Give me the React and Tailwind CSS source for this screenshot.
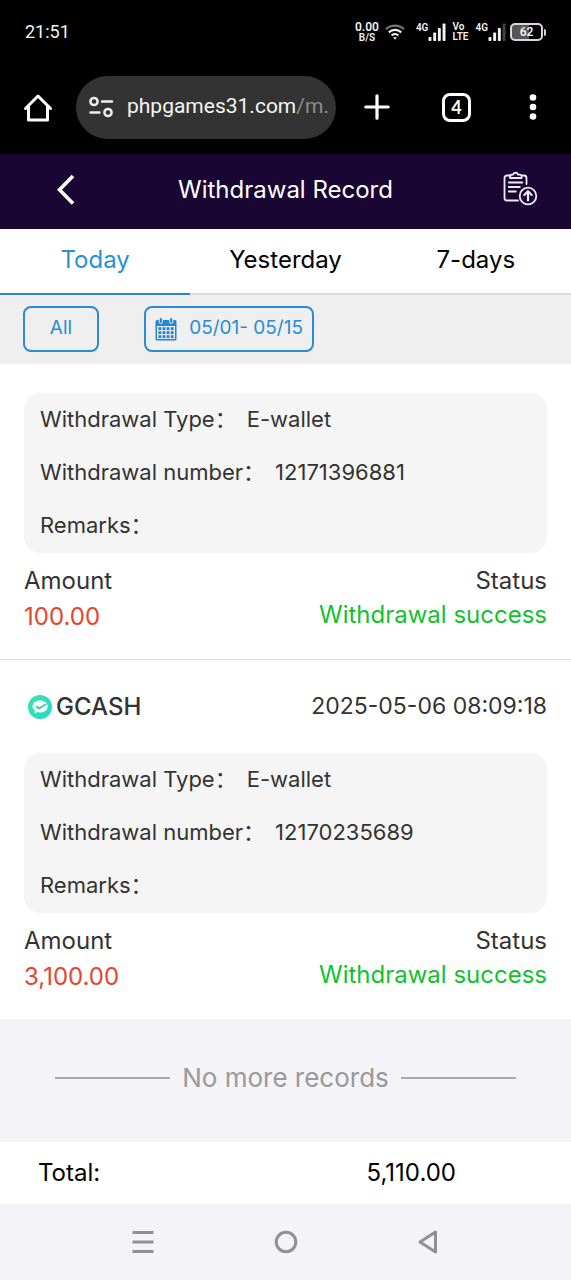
import { useState } from "react";
import clsx from "clsx";

const TABS = ["Today", "Yesterday", "7-days"];

const RECORDS = [
  { id: 1, type: "E-wallet", number: "12171396881", remarks: "", amount: "100.00", status: "Withdrawal success" },
  {
    id: 2,
    channel: "GCASH",
    time: "2025-05-06 08:09:18",
    type: "E-wallet",
    number: "12170235689",
    remarks: "",
    amount: "3,100.00",
    status: "Withdrawal success",
  },
];

const SignalIcon = ({ weak }) => (
  <svg viewBox="0 0 18 18" className="h-[18px] w-[18px]" fill="#f2f2f2" aria-hidden="true">
    <rect x="0.5" y="14" width="2.9" height="4" rx="0.8" />
    <rect x="5.2" y="9.5" width="2.9" height="8.5" rx="0.8" />
    <rect x="9.9" y="5" width="2.9" height="13" rx="0.8" />
    <rect x="14.6" y="0.5" width="2.9" height="17.5" rx="0.8" fill={weak ? "#444" : "#f2f2f2"} />
  </svg>
);

const StatusBar = () => (
  <div className="flex h-16 items-center justify-between px-[25px] text-[#f2f2f2]">
    <span className="font-[Roboto,sans-serif] text-lg">21:51</span>
    <div className="flex items-center font-[Roboto,sans-serif] font-semibold">
      <div className="flex flex-col items-center">
        <span className="text-xs leading-[11px]">0.00</span>
        <span className="text-[10px] leading-[10px]">B/S</span>
      </div>
      <svg viewBox="0 0 20 16" className="ml-[6px] h-4 w-5" fill="none" strokeWidth="2.2" aria-hidden="true">
        <path d="M1 5.2a13 13 0 0 1 18 0" stroke="#777" />
        <path d="M3.8 8.4a9 9 0 0 1 12.4 0" stroke="#f2f2f2" />
        <path d="M6.6 11.4a5 5 0 0 1 6.8 0" stroke="#f2f2f2" />
        <path d="M8 13.2h4L10 15.8z" fill="#f2f2f2" />
      </svg>
      <div className="ml-[11px] flex items-start">
        <span className="text-[10px] leading-[10px]">4G</span>
        <SignalIcon />
      </div>
      <div className="ml-[6px] flex flex-col text-[10px] leading-[10px]">
        <span>Vo</span>
        <span>LTE</span>
      </div>
      <div className="ml-[7px] flex items-start">
        <span className="text-[10px] leading-[10px]">4G</span>
        <SignalIcon weak />
      </div>
      <div className="ml-1 flex items-center gap-px">
        <div className="flex h-[18px] w-[33px] items-center justify-center rounded-[5px] border-2 border-[#d8d8d8] bg-linear-to-r from-[#555] from-60% to-black to-60% text-xs leading-none">
          62
        </div>
        <div className="h-[7px] w-[2px] rounded-r bg-[#d8d8d8]" />
      </div>
    </div>
  </div>
);

const BrowserBar = () => (
  <div className="flex h-[90px] items-center px-[23px] pb-1 text-white">
    <button type="button" aria-label="Home">
      <svg viewBox="0 0 30 30" className="h-[30px] w-[30px]" fill="none" stroke="currentColor" strokeWidth="3" strokeLinecap="round" strokeLinejoin="round">
        <path d="M2.5 16.500 15 4l12.500 12.500M5.500 14v14h19V14" />
      </svg>
    </button>
    <button type="button" className="ml-[23px] flex h-[63px] min-w-0 flex-1 items-center gap-[13px] rounded-full bg-[#333333] px-3">
      <svg viewBox="0 0 26 22" className="h-[22px] w-[26px] shrink-0" fill="none" stroke="#eeeeee" strokeWidth="2.500" strokeLinecap="round" aria-hidden="true">
        <circle cx="6" cy="5.500" r="3.600" />
        <path d="M14 5.500h10M2.500 16.500h9" />
        <circle cx="20" cy="16.500" r="3.600" />
      </svg>
      <span className="min-w-0 flex-1 whitespace-nowrap text-left font-[Roboto,sans-serif] text-[21px] text-[#f5f5f5]">
        phpgames31.com<span className="text-[#8c8c8c]">/m.</span>
      </span>
    </button>
    <button type="button" aria-label="New tab" className="ml-7">
      <svg viewBox="0 0 26 26" className="h-[26px] w-[26px]" stroke="currentColor" strokeWidth="3.200" strokeLinecap="round">
        <path d="M13 1.800v22.400M1.800 13h22.400" />
      </svg>
    </button>
    <button type="button" aria-label="Switch tabs" className="ml-[52px] flex h-[29px] w-[29px] items-center justify-center rounded-lg border-3 border-white font-[Lato,sans-serif] text-lg leading-none font-bold">
      4
    </button>
    <button type="button" aria-label="More" className="ml-[47px]">
      <svg viewBox="0 0 30 30" className="h-[30px] w-[30px]" fill="currentColor">
        <circle cx="15" cy="5.500" r="3.300" />
        <circle cx="15" cy="15" r="3.300" />
        <circle cx="15" cy="24.500" r="3.300" />
      </svg>
    </button>
  </div>
);

const PageHeader = () => (
  <header className="grid h-[75px] grid-cols-[1fr_auto_1fr] items-center bg-[#190633] px-[33px] pb-1 text-white">
    <button type="button" aria-label="Back" className="ml-[17px] justify-self-start">
      <svg viewBox="0 0 32 32" className="h-8 w-8" fill="none" stroke="currentColor" strokeWidth="3.600">
        <path d="M23 2 9.500 15.800 23 29.500" />
      </svg>
    </button>
    <h1 className="text-2xl">Withdrawal Record</h1>
    <button type="button" aria-label="Export record" className="justify-self-end">
      <svg viewBox="0 0 36 42" className="h-[42px] w-9" fill="none" stroke="#f1e9ff" strokeWidth="1.800" strokeLinecap="round" strokeLinejoin="round">
        <path d="M8.500 6.500H5A2.500 2.500 0 0 0 2.500 9v20A2.500 2.500 0 0 0 5 31.500h11M20.500 6.500H22A2.500 2.500 0 0 1 24.500 9v6" />
        <path d="M8 9V7.500a1.800 1.800 0 0 1 1.800-1.800h1.200a2.700 2.700 0 0 1 5.200 0h1.600a1.800 1.800 0 0 1 1.800 1.800V9z" />
        <path d="M6.800 13.500h13.500M6.800 18h11M6.800 22.500h7" />
        <circle cx="26" cy="27" r="8.300" />
        <path d="M26 31.500v-9M22.300 26l3.700-3.800 3.700 3.800" strokeWidth="2.200" />
      </svg>
    </button>
  </header>
);

const CalendarIcon = () => (
  <svg viewBox="0 0 22 24" className="h-6 w-[22px]" aria-hidden="true">
    <path d="M2 3h18a1.500 1.500 0 0 1 1.500 1.500V22a1.500 1.500 0 0 1-1.500 1.500H2A1.500 1.500 0 0 1 .5 22V4.500A1.500 1.500 0 0 1 2 3z" fill="#2488d0" />
    <path d="M2 9h18v13H2z" fill="#eee" />
    <g stroke="#eee" strokeWidth="1">
      <rect x="4.200" y="0.500" width="3.200" height="6" rx="1.600" fill="#2488d0" />
      <rect x="14.600" y="0.500" width="3.200" height="6" rx="1.600" fill="#2488d0" />
    </g>
    <g fill="#2488d0">
      {[10.2, 14.2, 18.2].map((y) =>
        [3.4, 7.5, 11.6, 15.7].map((x) => <rect key={`${x}-${y}`} x={x} y={y} width="2.900" height="2.900" />)
      )}
    </g>
  </svg>
);

const GCashIcon = () => (
  <svg viewBox="0 0 24 24" className="h-6 w-6" aria-hidden="true">
    <defs>
      <linearGradient id="gcash" x1="0" y1="0" x2="1" y2="1">
        <stop offset="0" stopColor="#3fe3a6" />
        <stop offset="1" stopColor="#1fd9cf" />
      </linearGradient>
    </defs>
    <circle cx="12" cy="12" r="12" fill="url(#gcash)" />
    <path d="M12 5.500c4.400 0 7.700 2.600 7.700 6s-3.300 6-7.500 6c-1 0-1.900-.1-2.700-.4L6.500 18.500l.3-3C5.300 14.400 4.500 13 4.500 11.500c0-3.400 3.200-6 7.500-6z" fill="#fff" />
    <path d="M8.500 11.500l2.600 2 6.600-4.200" fill="none" stroke="#25c9a8" strokeWidth="1.600" strokeLinecap="round" />
  </svg>
);

const Field = ({ label, value }) => (
  <div className="flex h-[53px] gap-[10px]">
    <dt>{label}：</dt>
    <dd>{value}</dd>
  </div>
);

const RecordItem = ({ record }) => (
  <li className="border-t border-[#dcdcdc] px-6 pb-6 text-[#333] first:border-t-0 first:pt-[29px]">
    {record.channel && (
      <div className="flex h-[93px] items-center justify-between pl-1">
        <div className="flex items-center gap-1">
          <GCashIcon />
          <span className="text-2xl font-medium">{record.channel}</span>
        </div>
        <time className="text-[23px]">{record.time}</time>
      </div>
    )}
    <dl className="h-40 rounded-2xl bg-[#f5f5f5] px-4 pt-[10px] text-[22px] leading-8">
      <Field label="Withdrawal Type" value={record.type} />
      <Field label="Withdrawal number" value={record.number} />
      <Field label="Remarks" value={record.remarks} />
    </dl>
    <div className="flex justify-between pt-[10px] text-2xl">
      <div>
        <p className="leading-9">Amount</p>
        <p className="leading-9 text-[#e8432e]">{record.amount}</p>
      </div>
      <div className="text-right">
        <p className="leading-9">Status</p>
        <p className="leading-8 text-[#12c12e]">{record.status}</p>
      </div>
    </div>
  </li>
);

const SystemNav = () => (
  <nav className="flex h-[76px] items-center justify-around bg-[#f3f3f8] px-[71px] text-[#919195]">
    <button type="button" aria-label="Recent apps">
      <svg viewBox="0 0 24 24" className="h-6 w-6" stroke="currentColor" strokeWidth="3">
        <path d="M1.500 2.500h21M1.500 12h21M1.500 21.500h21" />
      </svg>
    </button>
    <button type="button" aria-label="Home screen">
      <svg viewBox="0 0 24 24" className="h-6 w-6" fill="none" stroke="currentColor" strokeWidth="3">
        <circle cx="12" cy="12" r="9.800" />
      </svg>
    </button>
    <button type="button" aria-label="Go back">
      <svg viewBox="0 0 24 24" className="h-6 w-6" fill="none" stroke="currentColor" strokeWidth="3" strokeLinejoin="round">
        <path d="M18.500 2v20L3 12z" />
      </svg>
    </button>
  </nav>
);

export default function App() {
  const [tab, setTab] = useState("Today");

  return (
    <div className="min-h-screen bg-[#f3f3f8] font-[Inter,'Noto_Sans_CJK_SC',sans-serif]">
      <div className="bg-black">
        <StatusBar />
        <BrowserBar />
      </div>
      <PageHeader />

      {/* Period tabs */}
      <div className="grid grid-cols-3 bg-white" role="tablist">
        {TABS.map((t) => (
          <button
            key={t}
            type="button"
            role="tab"
            aria-selected={tab === t}
            onClick={() => setTab(t)}
            className={clsx(
              "h-[66px] border-b-2 pb-[2px] text-2xl",
              tab === t ? "border-[#2488d0] text-[#2a90d4]" : "border-[#dcdcdc] text-black"
            )}
          >
            {t}
          </button>
        ))}
      </div>

      {/* Filters */}
      <div className="flex h-[69px] items-center gap-[45px] bg-[#efefef] px-[23px] pb-[2px] text-[19px] text-[#2a8cd6]">
        <button type="button" className="h-[46px] w-[76px] rounded-lg border-2 border-[#2a8cd6]">
          All
        </button>
        <button type="button" className="flex h-[46px] w-[170px] items-center justify-between rounded-lg border-2 border-[#2a8cd6] px-[9px] whitespace-nowrap">
          <CalendarIcon />
          05/01- 05/15
        </button>
      </div>

      <ul className="bg-white">
        {RECORDS.map((r) => (
          <RecordItem key={r.id} record={r} />
        ))}
      </ul>

      <div className="flex h-[123px] items-center gap-3 px-[55px] pb-[6px] text-[#999]">
        <div className="h-[2px] flex-1 bg-[#aaa]" />
        <p className="text-[26px]">No more records</p>
        <div className="h-[2px] flex-1 bg-[#aaa]" />
      </div>

      <div className="flex h-[62px] items-center justify-between bg-white pl-[38px] pr-[115px] text-2xl text-black">
        <span>Total:</span>
        <span>5,110.00</span>
      </div>

      <SystemNav />
    </div>
  );
}
